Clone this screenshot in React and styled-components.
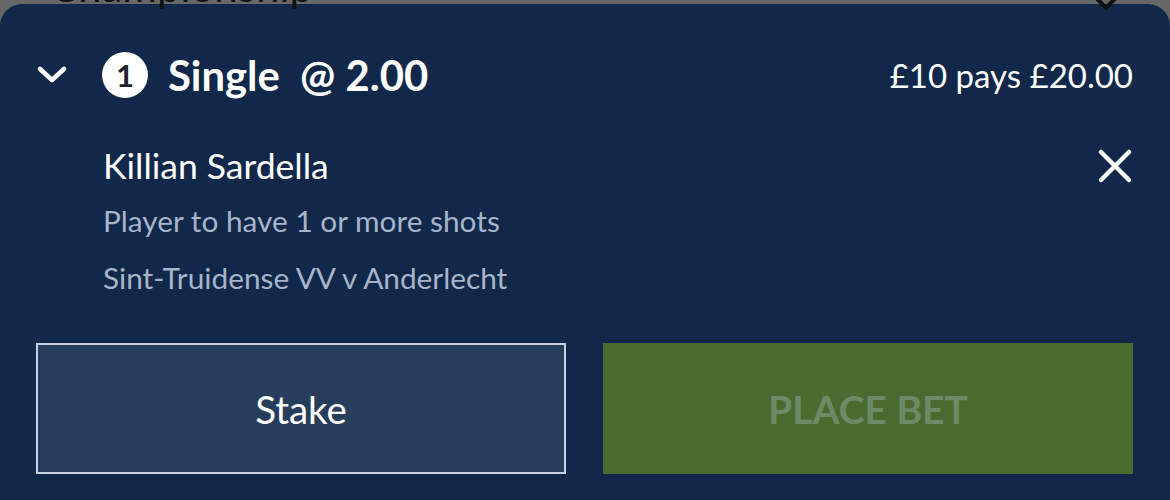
import React from "react";
import styled, { createGlobalStyle } from "styled-components";

const GlobalStyle = createGlobalStyle`
  html, body {
    margin: 0;
    padding: 0;
    background: #676767;
    font-family: Lato, "Open Sans", sans-serif;
  }
`;

const Page = styled.div`
  width: 1170px;
  height: 500px;
  overflow: hidden;
  background: #676767;
`;

// the list behind the sheet, only its bottom edge is visible
const Behind = styled.div`
  height: 4px;
  padding: 0 37px 0 50px;
  display: flex;
  justify-content: space-between;
`;

const BehindTitle = styled.div`
  margin-top: -36px;
  font-size: 42px;
  line-height: 44px;
  color: #111;
`;

const BehindChevron = styled.div`
  margin-top: -16px;
  margin-right: 16px;
  width: 18px;
  height: 18px;
  border-right: 4px solid #111;
  border-bottom: 4px solid #111;
  transform: rotate(45deg);
`;

const Sheet = styled.div`
  background: #11284a;
  border-radius: 22px 22px 0 0;
  height: 496px;
  box-sizing: border-box;
  padding: 0 37px 0 36px;
  display: flex;
  flex-direction: column;
`;

const Header = styled.div`
  display: flex;
  align-items: center;
  justify-content: space-between;
  height: 142px;
`;

const HeaderLeft = styled.div`
  display: flex;
  align-items: center;
`;

const Toggle = styled.div`
  width: 30px;
  display: flex;
  align-items: center;
  margin-left: 1px;
`;

const CountBadge = styled.div`
  width: 46px;
  height: 46px;
  border-radius: 50%;
  background: #fff;
  color: #1e2530;
  font-size: 31px;
  font-weight: 700;
  line-height: 46px;
  display: flex;
  align-items: center;
  justify-content: center;
  margin-left: 35px;
`;

const BetType = styled.div`
  color: #fff;
  font-size: 41.8px;
  font-weight: 700;
  margin-left: 20px;
  white-space: pre;
`;

const Payout = styled.div`
  color: #fff;
  font-size: 33px;
`;

const Selection = styled.div`
  display: flex;
  justify-content: space-between;
  padding-left: 67px;
`;

const SelectionText = styled.div`
  display: flex;
  flex-direction: column;
`;

const Runner = styled.div`
  color: #fff;
  font-size: 35.5px;
  line-height: 40px;
`;

const Sub = styled.div`
  color: #a7b4c9;
  font-size: 29.8px;
  line-height: 36px;
  margin-top: ${(p) => p.gap}px;
`;

const Remove = styled.div`
  margin-top: 2px;
`;

const Actions = styled.div`
  display: grid;
  grid-template-columns: 1fr 1fr;
  gap: 37px;
  margin-top: 47px;
`;

const StakeButton = styled.div`
  height: 131px;
  box-sizing: border-box;
  border: 2px solid #c6d1e4;
  background: #273d5c;
  color: #fff;
  font-size: 38.5px;
  display: flex;
  align-items: center;
  justify-content: center;
`;

const PlaceButton = styled.div`
  height: 131px;
  background: #4a6b30;
  color: #6d8a66;
  font-size: 39px;
  font-weight: 700;
  display: flex;
  align-items: center;
  justify-content: center;
`;

const Chevron = () => (
  <svg width="30" height="18" viewBox="0 0 30 18" fill="none">
    <path d="M3 3 L15 14 L27 3" stroke="#fff" strokeWidth="4.5" strokeLinecap="round" strokeLinejoin="round" />
  </svg>
);

const Cross = () => (
  <svg width="36" height="36" viewBox="0 0 36 36" fill="none">
    <path d="M4 4 L32 32 M32 4 L4 32" stroke="#fff" strokeWidth="4.5" strokeLinecap="round" />
  </svg>
);

export default function App() {
  return (
    <Page>
      <GlobalStyle />
      <Behind>
        <BehindTitle>Championship</BehindTitle>
        <BehindChevron />
      </Behind>
      <Sheet>
        <Header>
          <HeaderLeft>
            <Toggle>
              <Chevron />
            </Toggle>
            <CountBadge>1</CountBadge>
            <BetType>{"Single  @ 2.00"}</BetType>
          </HeaderLeft>
          <Payout>£10 pays £20.00</Payout>
        </Header>
        <Selection>
          <SelectionText>
            <Runner>Killian Sardella</Runner>
            <Sub gap={17}>Player to have 1 or more shots</Sub>
            <Sub gap={21}>Sint-Truidense VV v Anderlecht</Sub>
          </SelectionText>
          <Remove>
            <Cross />
          </Remove>
        </Selection>
        <Actions>
          <StakeButton>Stake</StakeButton>
          <PlaceButton>PLACE BET</PlaceButton>
        </Actions>
      </Sheet>
    </Page>
  );
}
